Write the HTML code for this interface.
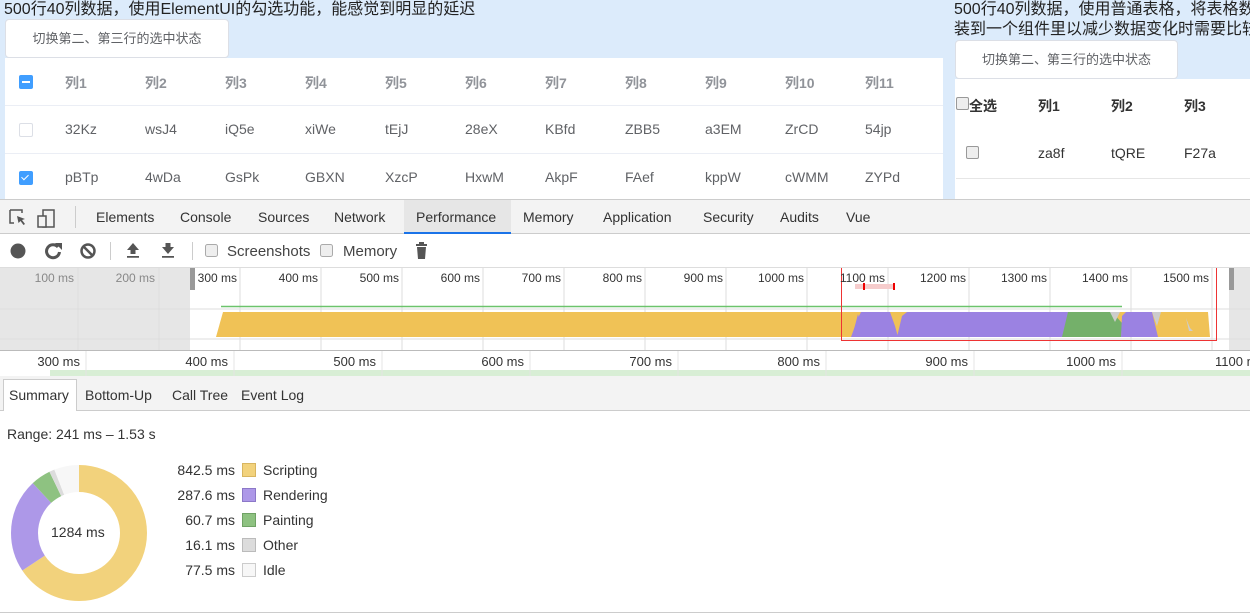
<!DOCTYPE html>
<html><head><meta charset="utf-8"><style>
*{margin:0;padding:0;box-sizing:border-box}
body{width:1250px;height:615px;overflow:hidden;background:#fff;font-family:"Liberation Sans","Noto Sans CJK SC",sans-serif;position:relative}
.a{position:absolute;white-space:nowrap}
.t{font-size:14px;color:#606266}
.h{font-size:14px;color:#909399;font-weight:bold}
.dt{font-size:14px;color:#333}
.lbl{font-size:12px;color:#333;text-align:right}
</style></head><body>
<!-- top app area -->
<div class="a" style="left:0;top:0;width:1250px;height:200px;background:#dcebfb"></div>
<div class="a" style="left:4px;top:0;font-size:16px;color:#222;line-height:19px">500行40列数据，使用ElementUI的勾选功能，能感觉到明显的延迟</div>
<div class="a" style="left:5px;top:19px;width:224px;height:39px;background:#fff;border:1px solid #dcdfe6;border-radius:4px;font-size:13px;color:#606266;line-height:37px;text-align:center">切换第二、第三行的选中状态</div>
<div class="a" style="left:5px;top:58px;width:938px;height:142px;background:#fff"></div>
<div class="a" style="left:5px;top:105px;width:938px;height:1px;background:#ebeef5"></div>
<div class="a" style="left:5px;top:153px;width:938px;height:1px;background:#ebeef5"></div>
<div class="a" style="left:19px;top:75px;width:14px;height:14px;background:#409eff;border-radius:2px"><div class="a" style="left:3px;top:6px;width:8px;height:2px;background:#fff"></div></div>
<div class="a" style="left:19px;top:123px;width:14px;height:14px;border:1px solid #dcdfe6;border-radius:2px;background:#fff"></div>
<div class="a" style="left:19px;top:171px;width:14px;height:14px;background:#409eff;border-radius:2px"><div class="a" style="left:4px;top:2px;width:4px;height:7px;border:solid #fff;border-width:0 1px 1px 0;transform:rotate(45deg)"></div></div>
<div class="a h" style="left:65px;top:73px">列1</div><div class="a h" style="left:145px;top:73px">列2</div><div class="a h" style="left:225px;top:73px">列3</div><div class="a h" style="left:305px;top:73px">列4</div><div class="a h" style="left:385px;top:73px">列5</div><div class="a h" style="left:465px;top:73px">列6</div><div class="a h" style="left:545px;top:73px">列7</div><div class="a h" style="left:625px;top:73px">列8</div><div class="a h" style="left:705px;top:73px">列9</div><div class="a h" style="left:785px;top:73px">列10</div><div class="a h" style="left:865px;top:73px">列11</div>
<div class="a t" style="left:65px;top:121px">32Kz</div><div class="a t" style="left:145px;top:121px">wsJ4</div><div class="a t" style="left:225px;top:121px">iQ5e</div><div class="a t" style="left:305px;top:121px">xiWe</div><div class="a t" style="left:385px;top:121px">tEjJ</div><div class="a t" style="left:465px;top:121px">28eX</div><div class="a t" style="left:545px;top:121px">KBfd</div><div class="a t" style="left:625px;top:121px">ZBB5</div><div class="a t" style="left:705px;top:121px">a3EM</div><div class="a t" style="left:785px;top:121px">ZrCD</div><div class="a t" style="left:865px;top:121px">54jp</div>
<div class="a t" style="left:65px;top:169px">pBTp</div><div class="a t" style="left:145px;top:169px">4wDa</div><div class="a t" style="left:225px;top:169px">GsPk</div><div class="a t" style="left:305px;top:169px">GBXN</div><div class="a t" style="left:385px;top:169px">XzcP</div><div class="a t" style="left:465px;top:169px">HxwM</div><div class="a t" style="left:545px;top:169px">AkpF</div><div class="a t" style="left:625px;top:169px">FAef</div><div class="a t" style="left:705px;top:169px">kppW</div><div class="a t" style="left:785px;top:169px">cWMM</div><div class="a t" style="left:865px;top:169px">ZYPd</div>
<!-- right panel -->
<div class="a" style="left:954px;top:0;font-size:16px;color:#222;line-height:20px">500行40列数据，使用普通表格，将表格数据<br>装到一个组件里以减少数据变化时需要比较</div>
<div class="a" style="left:955px;top:40px;width:223px;height:39px;background:#fff;border:1px solid #dcdfe6;border-radius:4px;font-size:13px;color:#606266;line-height:37px;text-align:center">切换第二、第三行的选中状态</div>
<div class="a" style="left:955px;top:79px;width:295px;height:121px;background:#fff"></div>
<div class="a" style="left:956px;top:178px;width:294px;height:1px;background:#e6e6e6"></div>
<div class="a" style="left:956px;top:97px;width:13px;height:13px;border:1px solid #999;border-radius:2px;background:#eee"></div>
<div class="a" style="left:969px;top:96px;font-size:14px;font-weight:bold;color:#333">全选</div>
<div class="a" style="left:1038px;top:96px;font-size:14px;font-weight:bold;color:#333">列1</div><div class="a" style="left:1111px;top:96px;font-size:14px;font-weight:bold;color:#333">列2</div><div class="a" style="left:1184px;top:96px;font-size:14px;font-weight:bold;color:#333">列3</div>
<div class="a" style="left:966px;top:146px;width:13px;height:13px;border:1px solid #999;border-radius:2px;background:#eee"></div>
<div class="a" style="left:1038px;top:145px;font-size:14px;color:#333">za8f</div><div class="a" style="left:1111px;top:145px;font-size:14px;color:#333">tQRE</div><div class="a" style="left:1184px;top:145px;font-size:14px;color:#333">F27a</div>
<!-- devtools tab bar -->
<div class="a" style="left:0;top:199px;width:1250px;height:35px;background:#f3f3f3;border-top:1px solid #ccc;border-bottom:1px solid #ccc"></div>
<svg class="a" style="left:8px;top:207px" width="60" height="22"><path d="M2 3h12v3M2 3v13h4" fill="none" stroke="#555" stroke-width="1.5"/><path d="M9 9l8 3-3 1 3 4-1.5 1-3-4-2 2z" fill="#555"/><rect x="35" y="3" width="11" height="17" fill="none" stroke="#555" stroke-width="1.5"/><rect x="30" y="9" width="8" height="11" fill="#f3f3f3" stroke="#555" stroke-width="1.5"/></svg>
<div class="a" style="left:75px;top:206px;width:1px;height:22px;background:#ccc"></div>
<div class="a" style="left:404px;top:200px;width:107px;height:34px;background:#e6e6e6;border-bottom:2px solid #1a73e8"></div>
<div class="a dt" style="left:96px;top:209px">Elements</div><div class="a dt" style="left:180px;top:209px">Console</div><div class="a dt" style="left:258px;top:209px">Sources</div><div class="a dt" style="left:334px;top:209px">Network</div><div class="a dt" style="left:416px;top:209px">Performance</div><div class="a dt" style="left:523px;top:209px">Memory</div><div class="a dt" style="left:603px;top:209px">Application</div><div class="a dt" style="left:703px;top:209px">Security</div><div class="a dt" style="left:780px;top:209px">Audits</div><div class="a dt" style="left:846px;top:209px">Vue</div>
<!-- toolbar -->
<div class="a" style="left:0;top:267px;width:1250px;height:1px;background:#ddd"></div>
<svg class="a" style="left:0;top:234px" width="440" height="33">
<circle cx="18" cy="17" r="7.5" fill="#555"/>
<path d="M58 13a6.5 6.5 0 1 0 1.5 5" fill="none" stroke="#555" stroke-width="3"/><path d="M55 9h7v7z" fill="#555"/>
<circle cx="88" cy="17" r="6.5" fill="none" stroke="#555" stroke-width="2.5"/><path d="M83.5 12.5l9 9" stroke="#555" stroke-width="2.5"/>
<rect x="110" y="8" width="1" height="18" fill="#ccc"/>
<path d="M133 9l6 7h-3.5v4h-5v-4h-3.5z M127 22h12v1.8h-12z" fill="#555"/>
<path d="M168 20l6-7h-3.5v-4h-5v4h-3.5z M162 22h12v1.8h-12z" fill="#555"/>
<rect x="192" y="8" width="1" height="18" fill="#ccc"/>
<rect x="205.5" y="10.5" width="12" height="12" rx="2" fill="#eee" stroke="#aaa"/>
<rect x="320.5" y="10.5" width="12" height="12" rx="2" fill="#eee" stroke="#aaa"/>
<path d="M416 10h11v2h-11z M419 8h5v2h-5z M417 13h9l-1 12h-7z" fill="#555"/>
</svg>
<div class="a dt" style="left:227px;top:243px;font-size:15px;color:#444">Screenshots</div>
<div class="a dt" style="left:343px;top:243px;font-size:15px;color:#444">Memory</div>
<!-- overview -->
<svg class="a" style="left:0;top:268px" width="1250" height="82">
<rect x="0" y="0" width="190" height="82" fill="#e6e6e6"/>
<rect x="1229" y="0" width="21" height="82" fill="#e6e6e6"/>
<g stroke="#ddd" stroke-width="1">
<line x1="78" y1="0" x2="78" y2="82"/><line x1="159" y1="0" x2="159" y2="82"/>
<line x1="240" y1="0" x2="240" y2="82"/><line x1="321" y1="0" x2="321" y2="82"/><line x1="402" y1="0" x2="402" y2="82"/><line x1="483" y1="0" x2="483" y2="82"/><line x1="564" y1="0" x2="564" y2="82"/><line x1="645" y1="0" x2="645" y2="82"/><line x1="726" y1="0" x2="726" y2="82"/><line x1="807" y1="0" x2="807" y2="82"/><line x1="888" y1="0" x2="888" y2="82"/><line x1="969" y1="0" x2="969" y2="82"/><line x1="1050" y1="0" x2="1050" y2="82"/><line x1="1131" y1="0" x2="1131" y2="82"/><line x1="1212" y1="0" x2="1212" y2="82"/>
<line x1="0" y1="41" x2="1250" y2="41"/><line x1="0" y1="71" x2="1250" y2="71"/>
</g>
<rect x="190" y="0" width="5" height="22" fill="#999"/>
<rect x="1229" y="0" width="5" height="22" fill="#999"/>
<line x1="221" y1="38.5" x2="1122" y2="38.5" stroke="#6cc36c" stroke-width="1.5"/>
<path d="M216 69L223 44H1208L1210 69Z" fill="#f0c256"/>
<path d="M851 69L858 50 861 44H890L895 58 898 69Z" fill="#9b82e2"/>
<path d="M852 69L858 46 861 58 864 44H880L888 60 890 69Z" fill="#9b82e2"/>
<path d="M897 69L902 48 907 44H1068L1066 60 1062 69Z" fill="#9b82e2"/>
<path d="M1062 69L1068 44H1112L1122 55 1121 69Z" fill="#74b06a"/>
<path d="M1110 44h10l-5 10z" fill="#ccc"/>
<path d="M1121 69L1122 48 1126 44H1152L1158 69Z" fill="#9b82e2"/>
<path d="M1152 44h9l-4 14z" fill="#ccc"/>
<path d="M1186 50l4 10 3 3-4 0z" fill="#ccc"/>
<rect x="855" y="16" width="40" height="5" fill="#f6cccc"/><rect x="863" y="15" width="2" height="7" fill="#e00"/><rect x="893" y="15" width="2" height="7" fill="#e00"/>
<rect x="841.5" y="-7.5" width="375" height="80" fill="none" stroke="#e33" stroke-width="1"/>
</svg>
<div class="a lbl" style="left:0;top:271px;width:74px;color:#888">100 ms</div>
<div class="a lbl" style="left:0;top:271px;width:155px;color:#888">200 ms</div>
<div class="a lbl" style="left:0;top:271px;width:237px">300 ms</div>
<div class="a lbl" style="left:0;top:271px;width:318px">400 ms</div>
<div class="a lbl" style="left:0;top:271px;width:399px">500 ms</div>
<div class="a lbl" style="left:0;top:271px;width:480px">600 ms</div>
<div class="a lbl" style="left:0;top:271px;width:561px">700 ms</div>
<div class="a lbl" style="left:0;top:271px;width:642px">800 ms</div>
<div class="a lbl" style="left:0;top:271px;width:723px">900 ms</div>
<div class="a lbl" style="left:0;top:271px;width:804px">1000 ms</div>
<div class="a lbl" style="left:0;top:271px;width:885px">1100 ms</div>
<div class="a lbl" style="left:0;top:271px;width:966px">1200 ms</div>
<div class="a lbl" style="left:0;top:271px;width:1047px">1300 ms</div>
<div class="a lbl" style="left:0;top:271px;width:1128px">1400 ms</div>
<div class="a lbl" style="left:0;top:271px;width:1209px">1500 ms</div>
<!-- bottom ruler -->
<div class="a" style="left:0;top:350px;width:1250px;height:1px;background:#bbb"></div>
<div class="a" style="left:50px;top:370px;width:1200px;height:6px;background:#d8eed5"></div>
<svg class="a" style="left:0;top:351px" width="1250" height="25"><g stroke="#e4e4e4"><line x1="86" y1="0" x2="86" y2="25"/><line x1="234" y1="0" x2="234" y2="25"/><line x1="382" y1="0" x2="382" y2="25"/><line x1="530" y1="0" x2="530" y2="25"/><line x1="678" y1="0" x2="678" y2="25"/><line x1="826" y1="0" x2="826" y2="25"/><line x1="974" y1="0" x2="974" y2="25"/><line x1="1122" y1="0" x2="1122" y2="25"/></g></svg>
<div class="a lbl" style="left:0;top:354px;width:80px;font-size:13px">300 ms</div>
<div class="a lbl" style="left:0;top:354px;width:228px;font-size:13px">400 ms</div>
<div class="a lbl" style="left:0;top:354px;width:376px;font-size:13px">500 ms</div>
<div class="a lbl" style="left:0;top:354px;width:524px;font-size:13px">600 ms</div>
<div class="a lbl" style="left:0;top:354px;width:672px;font-size:13px">700 ms</div>
<div class="a lbl" style="left:0;top:354px;width:820px;font-size:13px">800 ms</div>
<div class="a lbl" style="left:0;top:354px;width:968px;font-size:13px">900 ms</div>
<div class="a lbl" style="left:0;top:354px;width:1116px;font-size:13px">1000 ms</div>
<div class="a" style="left:1215px;top:354px;font-size:13px;color:#333">1100 ms</div>
<!-- summary tabs -->
<div class="a" style="left:0;top:376px;width:1250px;height:35px;background:#f3f3f3;border-bottom:1px solid #ccc"></div>
<div class="a" style="left:3px;top:379px;width:74px;height:32px;background:#fff;border:1px solid #ccc;border-bottom:none"></div>
<div class="a dt" style="left:9px;top:387px">Summary</div><div class="a dt" style="left:85px;top:387px">Bottom-Up</div><div class="a dt" style="left:172px;top:387px">Call Tree</div><div class="a dt" style="left:241px;top:387px">Event Log</div>
<div class="a dt" style="left:7px;top:426px;font-size:14px">Range: 241 ms – 1.53 s</div>
<!-- donut -->
<svg class="a" style="left:0;top:455px" width="160" height="160">
<g transform="rotate(-90 79 78)" fill="none" stroke-width="27">
<circle cx="79" cy="78" r="54.5" stroke="#f2d27c" stroke-dasharray="224.7 400"/>
<circle cx="79" cy="78" r="54.5" stroke="#ad98e8" stroke-dasharray="0 224.7 76.7 400"/>
<circle cx="79" cy="78" r="54.5" stroke="#8ec281" stroke-dasharray="0 301.4 16.2 400"/>
<circle cx="79" cy="78" r="54.5" stroke="#dcdcdc" stroke-dasharray="0 317.6 4.3 400"/>
<circle cx="79" cy="78" r="54.5" stroke="#f7f7f7" stroke-dasharray="0 321.9 20.5 400"/>
</g></svg>
<div class="a" style="left:51px;top:524px;font-size:14px;color:#333">1284 ms</div>
<div class="a dt" style="left:0;top:462px;width:235px;text-align:right">842.5 ms</div>
<div class="a dt" style="left:0;top:487px;width:235px;text-align:right">287.6 ms</div>
<div class="a dt" style="left:0;top:512px;width:235px;text-align:right">60.7 ms</div>
<div class="a dt" style="left:0;top:537px;width:235px;text-align:right">16.1 ms</div>
<div class="a dt" style="left:0;top:562px;width:235px;text-align:right">77.5 ms</div>
<div class="a" style="left:242px;top:463px;width:14px;height:14px;background:#f2d27c;border:1px solid #d8b560"></div>
<div class="a" style="left:242px;top:488px;width:14px;height:14px;background:#ad98e8;border:1px solid #8c78c8"></div>
<div class="a" style="left:242px;top:513px;width:14px;height:14px;background:#8ec281;border:1px solid #70a265"></div>
<div class="a" style="left:242px;top:538px;width:14px;height:14px;background:#dcdcdc;border:1px solid #bbb"></div>
<div class="a" style="left:242px;top:563px;width:14px;height:14px;background:#f7f7f7;border:1px solid #ccc"></div>
<div class="a dt" style="left:263px;top:462px">Scripting</div>
<div class="a dt" style="left:263px;top:487px">Rendering</div>
<div class="a dt" style="left:263px;top:512px">Painting</div>
<div class="a dt" style="left:263px;top:537px">Other</div>
<div class="a dt" style="left:263px;top:562px">Idle</div>
<div class="a" style="left:0;top:612px;width:1250px;height:1px;background:#ccc"></div>
</body></html>
